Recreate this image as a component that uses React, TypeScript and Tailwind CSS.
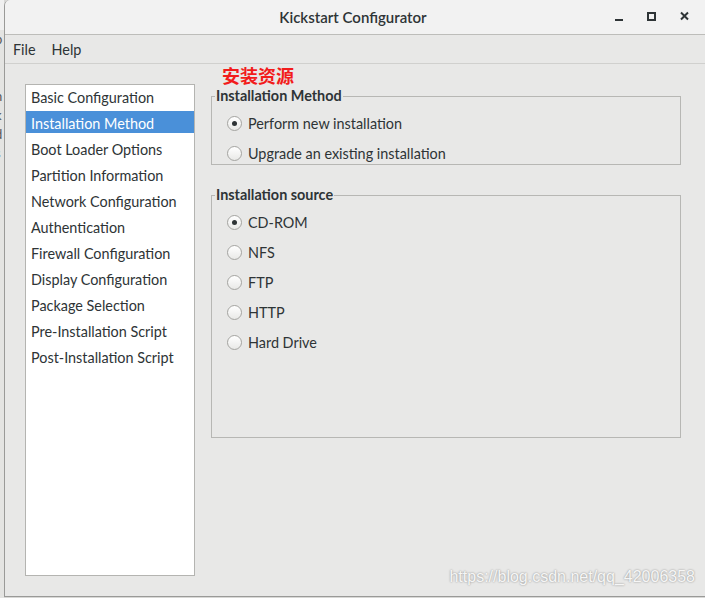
import React from 'react'

const SECTIONS = [
  'Basic Configuration',
  'Installation Method',
  'Boot Loader Options',
  'Partition Information',
  'Network Configuration',
  'Authentication',
  'Firewall Configuration',
  'Display Configuration',
  'Package Selection',
  'Pre-Installation Script',
  'Post-Installation Script',
]

function Radio({ label, checked = false }: { label: string; checked?: boolean }) {
  return (
    <div className="flex items-center h-5 gap-[6px]">
      <span className="w-[15px] h-[15px] rounded-full border border-[#a4a4a1] bg-linear-to-b from-white to-[#e9e9e7] flex items-center justify-center">
        {checked && <span className="w-[5px] h-[5px] rounded-full bg-[#2e3436]" />}
      </span>
      <span className="pt-px">{label}</span>
    </div>
  )
}

function Group({ title, children, className = '' }: { title: string; children: React.ReactNode; className?: string }) {
  return (
    <fieldset className={`border border-[#b7b7b4] ${className}`}>
      <legend className="ml-[3px] px-px font-bold leading-5">{title}</legend>
      <div className="flex flex-col gap-[10px] pt-[7px] pl-[15px]">{children}</div>
    </fieldset>
  )
}

export default function App() {
  const selected = 1

  return (
    <div
      className="relative w-[705px] h-[598px] flex overflow-hidden bg-[#d8d8d6] text-[14.4px] text-[#2e3436]"
      style={{ fontFamily: 'Lato, "Noto Sans", sans-serif' }}
    >
      {/* 后面窗口露出的一条 */}
      <div className="w-[4px] flex-shrink-0 overflow-hidden bg-[#e4e4e2]">
        <div className="h-[30px] bg-[#f0f0f0]" />
        <div className="-ml-[5px] flex flex-col text-[13px] leading-[19px] text-[#555]">
          <span>p</span>
          <span>-</span>
          <span>-</span>
          <span>n</span>
          <span>k</span>
          <span>d</span>
          <span>s</span>
        </div>
      </div>

      {/* 主窗口 */}
      <div className="flex-1 h-[597px] flex flex-col rounded-tl-[6px] border-l border-b border-[#9a9a98] bg-[#e8e8e7] overflow-hidden">
        {/* 标题栏 */}
        <div className="h-[35px] flex-shrink-0 relative flex items-center justify-center bg-[#f2f2f2] border-b border-[#bdbdba]">
          <span className="text-[15px] font-semibold pr-[4px]">Kickstart Configurator</span>
          <div className="absolute right-0 top-0 h-full flex items-center">
            <svg width="33" height="34" viewBox="0 0 33 34">
              <rect x="12" y="19" width="8" height="2" fill="#2e3436" />
            </svg>
            <svg width="33" height="34" viewBox="0 0 33 34">
              <rect x="12" y="13" width="7" height="7" fill="none" stroke="#2e3436" strokeWidth="2" />
            </svg>
            <svg width="33" height="34" viewBox="0 0 33 34" className="mr-[3px]">
              <path d="M12 12.5 L19 19.5 M19 12.5 L12 19.5" stroke="#2e3436" strokeWidth="2" />
            </svg>
          </div>
        </div>

        {/* 菜单栏 */}
        <div className="h-[29px] flex-shrink-0 flex items-center gap-[16px] pl-[8px] pt-[2px] border-b border-[#d0d0ce]">
          <span>File</span>
          <span>Help</span>
        </div>

        {/* 内容 */}
        <div className="flex-1 flex gap-[16px] pl-[20px] pt-[20px]">
          <div className="w-[170px] h-[492px] flex-shrink-0 bg-white border border-[#b4b4b1] flex flex-col gap-[4px]">
            {SECTIONS.map((name, i) => (
              <div
                key={name}
                className={`h-[22px] flex items-center pl-[5px] pt-[3px] ${
                  i === selected ? 'bg-[#4a90d9] text-white' : ''
                }`}
              >
                {name}
              </div>
            ))}
          </div>

          <div className="w-[470px] pt-[2px] flex flex-col gap-[20px]">
            <Group title="Installation Method" className="pb-px">
              <Radio label="Perform new installation" checked />
              <Radio label="Upgrade an existing installation" />
            </Group>
            <Group title="Installation source" className="pb-[85px]">
              <Radio label="CD-ROM" checked />
              <Radio label="NFS" />
              <Radio label="FTP" />
              <Radio label="HTTP" />
              <Radio label="Hard Drive" />
            </Group>
          </div>
        </div>
      </div>

      {/* 标注 */}
      <span
        className="absolute left-[222px] top-[63px] text-[18px] font-bold text-[#f21c1c] leading-6"
        style={{ fontFamily: '"Noto Sans CJK SC", sans-serif' }}
      >
        安装资源
      </span>

      {/* 水印 */}
      <span
        className="absolute right-[10px] bottom-[9px] text-[16px] text-[#f6f6f6] [text-shadow:0_0_2px_rgba(0,0,0,0.45)]"
        style={{ fontFamily: '"Liberation Sans", Arial, sans-serif' }}
      >
        https://blog.csdn.net/qq_42006358
      </span>
    </div>
  )
}
